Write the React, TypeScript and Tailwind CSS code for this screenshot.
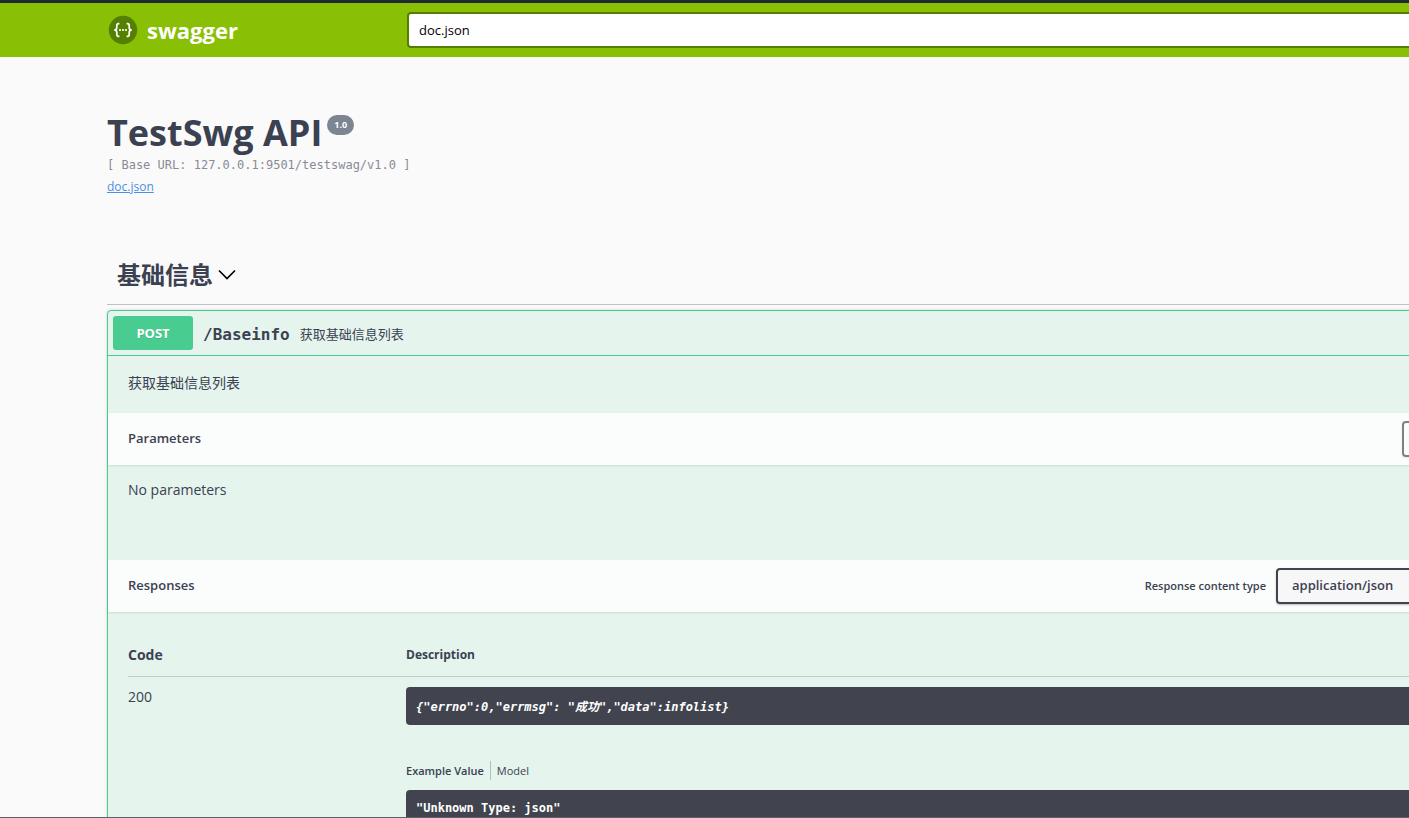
import type { ReactNode } from "react";

const sans = "font-['Open_Sans','Noto_Sans_CJK_SC',sans-serif]";
const mono = "font-['DejaVu_Sans_Mono','Noto_Sans_CJK_SC',monospace]";

function SwaggerLogo() {
  return (
    <a href="#" className="flex w-[300px] shrink-0 items-center gap-[9px] pl-px text-white">
      <svg width="30" height="30" viewBox="0 0 30 30" aria-hidden="true">
        <circle cx="15" cy="15" r="14.2" fill="#547f00" />
        <g fill="none" stroke="#fff" strokeWidth="1.7">
          <path d="M11.4 8.6H10.6C9.4 8.6 8.8 9.3 8.8 10.4V12.6C8.8 14.1 8.2 15 6.2 15C8.2 15 8.8 15.9 8.8 17.4V19.6C8.8 20.7 9.4 21.4 10.6 21.4H11.4" />
          <path d="M18.6 8.6H19.4C20.6 8.6 21.2 9.3 21.2 10.4V12.6C21.2 14.1 21.8 15 23.8 15C21.8 15 21.2 15.9 21.2 17.4V19.6C21.2 20.7 20.6 21.4 19.4 21.4H18.6" />
        </g>
        <g fill="#fff">
          <circle cx="12" cy="15" r="1.1" />
          <circle cx="15" cy="15" r="1.1" />
          <circle cx="18" cy="15" r="1.1" />
        </g>
      </svg>
      <span className="text-[22px] leading-8 font-bold">swagger</span>
    </a>
  );
}

function SectionHeader({ title, children }: { title: string; children?: ReactNode }) {
  return (
    <div className="flex h-[52px] items-center justify-between bg-white/80 px-5 shadow-[0_1px_2px_rgba(0,0,0,0.1)]">
      <h4 className="text-[13px] font-semibold">{title}</h4>
      {children}
    </div>
  );
}

function Topbar() {
  return (
    <header className="h-[54px] shrink-0 bg-[#89bf04]">
      <div className="-mr-[118px] ml-[107px] flex h-full items-center">
        <SwaggerLogo />
        <input
          type="text"
          aria-label="Specification URL"
          defaultValue="doc.json"
          className="h-9 flex-1 rounded-[4px] border-2 border-[#547f00] bg-white px-[10px] text-[13px] text-black outline-none"
        />
      </div>
    </header>
  );
}

function Info() {
  return (
    <section className="pt-[54px] pb-14">
      <h2 className="flex items-start gap-[5px] text-[36px] leading-[44px] font-bold">
        TestSwg API
        <span className="mt-1 rounded-full bg-[#7d8492] px-[7px] text-[9px] leading-5 text-white">1.0</span>
      </h2>
      <pre className={`${mono} text-[12px] leading-5 text-[#888b95]`}>
        [ Base URL: 127.0.0.1:9501/testswag/v1.0 ]
      </pre>
      <a href="#" className="block w-fit text-[12px] leading-6 text-[#4990e2] underline">
        doc.json
      </a>
    </section>
  );
}

function Responses() {
  return (
    <div className="p-5">
      <table className="w-full border-collapse text-left">
        <thead>
          <tr className="border-b border-[#bccdc8]">
            <th className="w-[278px] pt-3 pb-[10px] text-[14px] leading-[22px] font-bold">Code</th>
            <th className="pt-3 pb-[10px] text-[12px] leading-[22px] font-bold">Description</th>
          </tr>
        </thead>
        <tbody>
          <tr className="align-top">
            <td className="pt-[10px] text-[14px] leading-5">200</td>
            <td className="pt-[10px]">
              <pre className={`${mono} rounded-[4px] bg-[#41444e] px-[10px] pt-3 pb-[10px] text-[12px] leading-4 font-bold text-white italic`}>
                {'{"errno":0,"errmsg": "成功","data":infolist}'}
              </pre>
              <div className="mt-9 mb-[10px] flex text-[11px] leading-[19px]">
                <button type="button" className="border-r border-[#b0c1ba] pr-[6px] font-semibold">
                  Example Value
                </button>
                <button type="button" className="pl-[6px]">
                  Model
                </button>
              </div>
              <pre className={`${mono} rounded-[4px] bg-[#41444e] p-[10px] text-[12px] leading-4 font-bold text-white`}>
                "Unknown Type: json"
              </pre>
            </td>
          </tr>
        </tbody>
      </table>
    </div>
  );
}

function Operation() {
  return (
    <article className="rounded-[4px] border border-[#49cc90] bg-[#e5f4ed] shadow-[0_0_3px_rgba(0,0,0,0.19)]">
      <button type="button" className="flex w-full items-center border-b border-[#49cc90] p-[5px] text-left">
        <span className="w-20 rounded-[3px] bg-[#49cc90] text-center text-[13px] leading-[34px] font-bold text-white [text-shadow:0_1px_0_rgba(0,0,0,0.1)]">
          POST
        </span>
        <span className="flex items-center pt-[3px]">
          <span className={`${mono} px-[10px] text-[16px] font-bold`}>/Baseinfo</span>
          <span className="text-[13px]">获取基础信息列表</span>
        </span>
      </button>
      <p className="px-5 pt-[17px] pb-5 text-[14px] leading-5">获取基础信息列表</p>

      <SectionHeader title="Parameters">
        <button
          type="button"
          aria-label="Try it out"
          className="h-9 w-[104px] rounded-[4px] border-2 border-[#808080] shadow-[0_1px_2px_rgba(0,0,0,0.1)]"
        />
      </SectionHeader>
      <p className="px-5 pt-[15px] pb-[60px] text-[14px] leading-5">No parameters</p>

      <SectionHeader title="Responses">
        <label className="flex items-center gap-[10px] text-[11px] font-semibold">
          Response content type
          <select className="h-9 w-[230px] appearance-none rounded-[4px] border-2 border-[#41444e] bg-[#f7f7f7] px-[14px] text-[13px] font-semibold shadow-[0_1px_2px_rgba(0,0,0,0.25)]">
            <option>application/json</option>
          </select>
        </label>
      </SectionHeader>
      <Responses />
    </article>
  );
}

export default function App() {
  return (
    <div
      className={`${sans} flex h-screen flex-col overflow-hidden border-t-[3px] border-b border-t-[#1f2a2f] border-b-[#635f68] bg-[#fafafa] text-[#3b4151]`}
    >
      <Topbar />
      <main className="-mr-[118px] ml-[107px] min-h-0 flex-1">
        <Info />
        <h3 className="mb-[5px] flex items-center gap-1 border-b border-[#bfc0c4] px-[10px] pt-[2px] pb-[11px] text-[24px] leading-9 font-bold">
          基础信息
          <button type="button" aria-label="Collapse section">
            <svg width="20" height="20" viewBox="0 0 20 20" aria-hidden="true">
              <path d="M2 5.5L10 13.5L18 5.5" fill="none" stroke="#000" strokeWidth="1.6" />
            </svg>
          </button>
        </h3>
        <Operation />
      </main>
    </div>
  );
}
